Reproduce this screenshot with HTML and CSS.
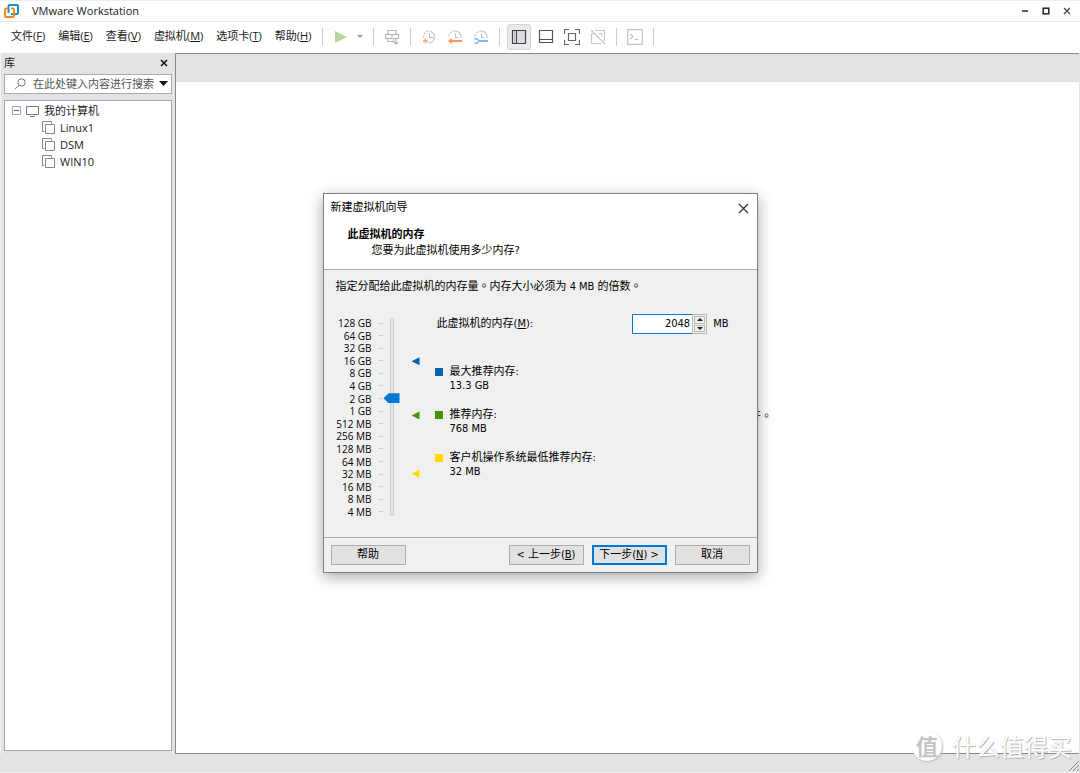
FILE: index.html
```html
<!DOCTYPE html>
<html lang="zh-CN">
<head>
<meta charset="utf-8">
<title>VMware Workstation</title>
<link rel="stylesheet" href="styles.css">
</head>
<body>
<div class="app">
  <header class="titlebar">
    <svg class="logo" width="16" height="16" viewBox="0 0 16 16" fill="none" stroke-width="2">
      <path d="M4.500 10V3a1 1 0 0 1 1-1H13a1 1 0 0 1 1 1v7a1 1 0 0 1-1 1H7" stroke="#1b8fc9"/>
      <path d="M4 5.500H2a1 1 0 0 0-1 1V13a1 1 0 0 0 1 1h7a1 1 0 0 0 1-1V6.500a1 1 0 0 0-1-1H7" stroke="#f38b20"/>
    </svg>
    <h1 class="app-name">VMware Workstation</h1>
    <div class="window-controls">
      <button type="button" aria-label="最小化"><svg width="8" height="8" viewBox="0 0 8 8"><path d="M1 4h6" stroke="#333" stroke-width="1.6"/></svg></button>
      <button type="button" aria-label="最大化"><svg width="8" height="8" viewBox="0 0 8 8"><rect x="1.2" y="1.2" width="5.600" height="5.600" fill="none" stroke="#222" stroke-width="1.5"/></svg></button>
      <button type="button" aria-label="关闭"><svg width="8" height="8" viewBox="0 0 8 8"><path d="M1 1l6 6M7 1L1 7" stroke="#444" stroke-width="1.2"/></svg></button>
    </div>
  </header>

  <div class="menubar">
    <nav class="menus">
      <button type="button">文件(<u>F</u>)</button>
      <button type="button">编辑(<u>E</u>)</button>
      <button type="button">查看(<u>V</u>)</button>
      <button type="button">虚拟机(<u>M</u>)</button>
      <button type="button">选项卡(<u>T</u>)</button>
      <button type="button">帮助(<u>H</u>)</button>
    </nav>
    <div class="tools">
      <div class="tool-group power">
        <button type="button" aria-label="开启"><svg width="16" height="16" viewBox="0 0 16 16"><path d="M2 2l12 6-12 6z" fill="#b5d7a0"/></svg></button>
        <button type="button" aria-label="电源选项"><svg width="6" height="4" viewBox="0 0 6 4"><path d="M0 0h6L3 3z" fill="#999"/></svg></button>
      </div>
      <div class="tool-group send">
        <button type="button" aria-label="发送"><svg width="18" height="18" viewBox="0 0 18 18" fill="none" stroke="#b4b4b4" stroke-width="1.2"><path d="M5 6.500v-4h8v4M9 6.500v4M2.500 11V6.500h13v4M2.500 10.500H9M5 11v2.500h5.500v-3h5M13 11v5M10.800 14l2.200 2.200 2.200-2.200"/></svg></button>
      </div>
      <div class="tool-group">
        <button type="button" aria-label="拍摄快照"><svg width="16" height="16" viewBox="0 0 16 16" fill="none"><path d="M8 2a6 6 0 1 1-1 12" stroke="#c4c4c4" stroke-width="1.2"/><path d="M7 2a6 6 0 0 0-4.500 7" stroke="#c4c4c4" stroke-width="1.2" stroke-dasharray="2 1.300"/><path d="M8.500 4.500v4H12" stroke="#bbb"/><path d="M4.500 9.500v5M2 12h5" stroke="#ffa477" stroke-width="1.400"/></svg></button>
        <button type="button" aria-label="恢复快照"><svg width="16" height="16" viewBox="0 0 16 16" fill="none"><path d="M8 2a6 6 0 0 1 6 7" stroke="#c4c4c4" stroke-width="1.2"/><path d="M8 2a6 6 0 0 0-6 7" stroke="#c4c4c4" stroke-width="1.2" stroke-dasharray="2 1.300"/><path d="M8.500 4.500v4H11" stroke="#bbb"/><path d="M2 12h13" stroke="#ff9460" stroke-width="2"/><path d="M5 9v6l-4-3z" fill="#ff9460"/></svg></button>
        <button type="button" aria-label="管理快照"><svg width="16" height="16" viewBox="0 0 16 16" fill="none"><path d="M8 2a6 6 0 0 1 6 7" stroke="#c4c4c4" stroke-width="1.2"/><path d="M8 2a6 6 0 0 0-6 7" stroke="#c4c4c4" stroke-width="1.2" stroke-dasharray="2 1.300"/><path d="M8.500 4.500v4H11" stroke="#bbb"/><path d="M6 12h9" stroke="#72c3ee" stroke-width="2"/><path d="M1.500 10Q5 9 5.500 12 5 15 1.500 14" stroke="#72c3ee" stroke-width="1.500"/></svg></button>
      </div>
      <div class="tool-group view">
        <button type="button" class="active" aria-label="显示库" aria-pressed="true"><svg width="16" height="16" viewBox="0 0 16 16" fill="none" stroke="#444"><path d="M7 2h7v12H7z" fill="#dcdde2" stroke="none"/><path d="M1.500 1.500h13v13h-13zM5.500 2v12" stroke-width="1.200"/><path d="M3.500 2v12" stroke="#bbb"/></svg></button>
        <button type="button" aria-label="缩略图栏"><svg width="16" height="16" viewBox="0 0 16 16" fill="none" stroke="#555" stroke-width="1.2"><path d="M1.500 1.500h13v12h-13zM1.500 10.500h13"/></svg></button>
        <button type="button" aria-label="全屏"><svg width="16" height="16" viewBox="0 0 16 16" fill="none" stroke="#666" stroke-width="1.200"><path d="M.5 5V.5h4.500M11 .5h4.500V5M15.500 11v4.500H11M5 15.500H.5V11M4.500 4.500h7v7h-7z"/></svg></button>
        <button type="button" aria-label="Unity"><svg width="16" height="16" viewBox="0 0 16 16" fill="none" stroke="#c8c8c8" stroke-width="1.200"><path d="M5 1.500h9.500V12M11.500 14.500h-10V5H4M1 1l14 14M8.500 4.500h3v3"/></svg></button>
      </div>
      <div class="tool-group">
        <button type="button" aria-label="控制台"><svg width="16" height="16" viewBox="0 0 16 16" fill="none" stroke="#c4c4c4" stroke-width="1.200"><path d="M.7.7h14.600v14.600H.7zM3.500 5L6 7.500 3.500 10M7.500 10.500h4"/></svg></button>
      </div>
    </div>
  </div>

  <div class="workspace">
    <aside class="library">
      <div class="library-head">
        <h2>库</h2>
        <button type="button" aria-label="关闭库"><svg width="8" height="8" viewBox="0 0 8 8"><path d="M1 1l6 6M7 1L1 7" stroke="#111" stroke-width="1.500"/></svg></button>
      </div>
      <div class="search">
        <svg width="12" height="12" viewBox="0 0 12 12" fill="none" stroke="#777"><circle cx="7.500" cy="4.500" r="3.700"/><path d="M5 7.500L.8 11"/></svg>
        <input type="text" aria-label="搜索" placeholder="在此处键入内容进行搜索">
        <button type="button" aria-label="搜索选项"><svg width="9" height="6" viewBox="0 0 9 6"><path d="M0 0h9L4.500 5z" fill="#111"/></svg></button>
      </div>
      <div class="tree">
        <div class="tree-root">
          <svg width="9" height="9" viewBox="0 0 9 9"><path d="M.5.5h8v8h-8z" fill="#fff" stroke="#aaa"/><path d="M2 4.500h5" stroke="#5568a0"/></svg>
          <svg width="13" height="12" viewBox="0 0 13 12" fill="none" stroke="#777"><path d="M.5 1.500h12v8H.5zM4 11.500h5"/></svg>
          <span>我的计算机</span>
        </div>
        <ul>
          <li><svg width="13" height="13" viewBox="0 0 13 13" fill="none" stroke="#888"><path d="M2.500 10.500h-2v-10h9v2M3.500 3.500h9v9h-9z"/></svg><span>Linux1</span></li>
          <li><svg width="13" height="13" viewBox="0 0 13 13" fill="none" stroke="#888"><path d="M2.500 10.500h-2v-10h9v2M3.500 3.500h9v9h-9z"/></svg><span>DSM</span></li>
          <li><svg width="13" height="13" viewBox="0 0 13 13" fill="none" stroke="#888"><path d="M2.500 10.500h-2v-10h9v2M3.500 3.500h9v9h-9z"/></svg><span>WIN10</span></li>
        </ul>
      </div>
    </aside>
    <main class="stage">
      <div class="tabstrip"></div>
      <div class="canvas"><p>开<span class="stop" lang="zh-TW">。</span></p></div>
    </main>
  </div>
  <footer class="statusbar">
    <svg width="10" height="10" viewBox="0 0 10 10" stroke="#888"><path d="M0 10L10 0M4 10l6-6M8 10l2-2"/></svg>
  </footer>

  <div class="overlay">
    <section class="dialog" role="dialog" aria-labelledby="dialog-title">
      <header class="dialog-head">
        <div class="dialog-title">
          <span id="dialog-title">新建虚拟机向导</span>
          <button type="button" aria-label="关闭"><svg width="11" height="11" viewBox="0 0 11 11"><path d="M1 1l9 9M10 1l-9 9" stroke="#333" stroke-width="1.200"/></svg></button>
        </div>
        <h2>此虚拟机的内存</h2>
        <p>您要为此虚拟机使用多少内存?</p>
      </header>
      <div class="dialog-body">
        <p class="hint">指定分配给此虚拟机的内存量<span class="stop" lang="zh-TW">。</span>内存大小必须为 4 MB 的倍数<span class="stop" lang="zh-TW">。</span></p>
        <div class="memory">
          <ol class="scale">
            <li>128 GB</li><li>64 GB</li><li>32 GB</li><li>16 GB</li><li>8 GB</li><li>4 GB</li><li>2 GB</li><li>1 GB</li><li>512 MB</li><li>256 MB</li><li>128 MB</li><li>64 MB</li><li>32 MB</li><li>16 MB</li><li>8 MB</li><li>4 MB</li>
          </ol>
          <input class="slider" type="range" min="0" max="15" value="9" aria-label="内存大小">
          <div class="markers">
            <i class="max" style="top:21%"></i>
            <i class="rec" style="top:48%"></i>
            <i class="min" style="top:77%"></i>
          </div>
          <div class="details">
            <div class="amount">
              <label for="mem">此虚拟机的内存(<u>M</u>):</label>
              <div class="spin">
                <input id="mem" type="text" inputmode="numeric" value="2048">
                <div class="spin-buttons">
                  <button type="button" aria-label="增加"><svg width="6" height="3" viewBox="0 0 6 3"><path d="M0 3h6L3 0z" fill="#222"/></svg></button>
                  <button type="button" aria-label="减少"><svg width="6" height="3" viewBox="0 0 6 3"><path d="M0 0h6L3 3z" fill="#222"/></svg></button>
                </div>
              </div>
              <span class="unit">MB</span>
            </div>
            <dl class="legend">
              <div class="max"><dt>最大推荐内存:</dt><dd>13.3 GB</dd></div>
              <div class="rec"><dt>推荐内存:</dt><dd>768 MB</dd></div>
              <div class="min"><dt>客户机操作系统最低推荐内存:</dt><dd>32 MB</dd></div>
            </dl>
          </div>
        </div>
      </div>
      <footer class="dialog-foot">
        <button type="button" class="help">帮助</button>
        <button type="button">&lt; 上一步(<u>B</u>)</button>
        <button type="button" class="primary">下一步(<u>N</u>) &gt;</button>
        <button type="button">取消</button>
      </footer>
    </section>
  </div>

  <div class="watermark"><span class="badge">值</span><span>什么值得买</span></div>
</div>
</body>
</html>
```
FILE: styles.css
```css
* { box-sizing: border-box; }
body, h1, h2, p, ul, ol, dl, dd { margin: 0; padding: 0; }
ul, ol { list-style: none; }
body {
  color: #1a1a1a;
  font: 11px/16px "Open Sans", "Noto Sans CJK SC", sans-serif;
}
button, input { font: inherit; color: inherit; margin: 0; }
button { padding: 0; border: 0; background: none; }
h1, h2 { font-size: 11px; font-weight: 400; }
svg { display: block; flex: none; }
u { text-underline-offset: 1px; }
.stop { font-family: "Noto Sans CJK TC", sans-serif; }

.app {
  position: relative;
  display: flex;
  flex-direction: column;
  min-height: 100vh;
  overflow: hidden;
  background: #e2e3e5;
}

/* Title and menu bars */
.titlebar {
  display: flex;
  align-items: center;
  height: 22px;
  padding: 0 9px 0 4px;
  border-top: 1px solid #eee;
  border-bottom: 1px solid #e8e8e8;
  background: #fff;
}
.app-name { margin-left: 12px; }
.window-controls { display: flex; gap: 13px; margin-left: auto; }
.menubar {
  display: flex;
  align-items: center;
  height: 31px;
  padding: 0 0 2px 11px;
  background: #fff;
}
.menus { display: flex; gap: 13px; padding-bottom: 1px; }
.menus button { white-space: nowrap; }
.tools { display: flex; margin-left: 11px; }
.tool-group {
  display: flex;
  align-items: center;
  gap: 10px;
  height: 18px;
  padding: 0 10px;
  border-left: 1px solid #ccc;
}
.tool-group:last-child { border-right: 1px solid #ccc; }
.tool-group.power { gap: 8px; }
.tool-group.send { padding: 0 9px; }
.tool-group.view { padding-left: 7px; }
.view .active {
  padding: 4px 3px;
  margin-right: -3px;
  border: 1px solid #d4d4d4;
  border-radius: 3px;
  background: #e9eaeb;
}

/* Workspace */
.workspace { flex: 1; display: flex; }
.library {
  display: flex;
  flex-direction: column;
  width: 175px;
  padding: 0 3px 3px;
  border-left: 1px solid #f2f2f2;
}
.library-head {
  display: flex;
  justify-content: space-between;
  align-items: center;
  height: 20px;
  padding-right: 4px;
}
.search {
  display: flex;
  align-items: center;
  height: 20px;
  margin-top: 1px;
  padding: 0 3px 0 9px;
  border: 1px solid #aaa;
  background: #fff;
}
.search input {
  flex: 1;
  min-width: 0;
  margin-left: 7px;
  padding: 0;
  border: 0;
  outline: 0;
  background: none;
}
.search input::placeholder { color: #555; opacity: 1; }
.tree {
  flex: 1;
  margin-top: 6px;
  padding: 1px 7px;
  border: 1px solid #a2a6ae;
  background: #fff;
  line-height: 17px;
}
.tree-root { display: flex; align-items: center; gap: 5px; }
.tree ul { padding-left: 30px; }
.tree li { display: flex; align-items: center; gap: 5px; height: 17px; }
.stage {
  flex: 1;
  display: flex;
  flex-direction: column;
  margin-right: 1px;
  border: 1px solid #888;
  border-right: 0;
  background: #fff;
}
.tabstrip { height: 28px; background: #e2e3e5; }
.canvas { flex: 1; display: grid; place-items: center; }
.canvas p { padding: 0 0 4px 267px; }
.statusbar {
  display: flex;
  justify-content: flex-end;
  align-items: flex-end;
  height: 19px;
  padding: 0 1px 1px;
  border-bottom: 1px solid #f0f0f0;
}

/* Wizard dialog */
.overlay {
  position: absolute;
  inset: 0;
  display: grid;
  place-items: center;
  padding-bottom: 7px;
}
.dialog {
  width: 435px;
  border: 1px solid #808080;
  background: #f0f0f0;
  box-shadow: 0 4px 14px rgba(0, 0, 0, .35);
  color: #000;
  font-family: "DejaVu Sans Condensed", "Noto Sans CJK SC", sans-serif;
  font-size: 11px;
}
.dialog-head {
  height: 76px;
  padding: 6px 8px 0 7px;
  border-bottom: 1px solid #aaa;
  background: #fff;
}
.dialog-title { display: flex; justify-content: space-between; align-items: center; }
.dialog-head h2 { margin: 11px 0 0 17px; font-weight: 700; }
.dialog-head p { margin-left: 41px; }
.dialog-body { padding: 7px 12px 19px; }
.memory { display: flex; margin-top: 22px; }
.scale {
  display: flex;
  flex-direction: column;
  justify-content: space-between;
  width: 48px;
  height: 201px;
  font-family: "Open Sans", sans-serif;
  font-size: 10px;
  line-height: 12px;
}
.scale li {
  display: flex;
  align-items: center;
  justify-content: flex-end;
  width: 48px;
  padding-right: 12px;
  white-space: nowrap;
  position: relative;
}
.scale li::after {
  content: "";
  position: absolute;
  right: 1px;
  width: 4px;
  height: 1px;
  background: #ccc;
}
.slider {
  appearance: none;
  writing-mode: vertical-lr;
  direction: rtl;
  width: 16px;
  height: 198px;
  margin-top: 1px;
  background: linear-gradient(#e0e3e3, #e0e3e3) center / 2px 100% no-repeat, linear-gradient(#ccd0d0, #ccd0d0) center / 4px 100% no-repeat;
}
.slider::-webkit-slider-thumb {
  appearance: none;
  width: 16px;
  height: 10px;
  background: #0078d7;
  clip-path: polygon(0 50%, 5px 0, 100% 0, 100% 100%, 5px 100%);
}
.markers { position: relative; width: 20px; }
.markers i {
  position: absolute;
  right: 0;
  width: 8px;
  height: 8px;
  margin-top: -2px;
  clip-path: polygon(0 50%, 100% 0, 100% 100%);
}
.max { --key: #0061ae; }
.rec { --key: #419507; }
.min { --key: #ffdb00; }
.markers i, .legend div::before { background: var(--key); }
.details { flex: 1; padding-left: 15px; }
.amount {
  display: flex;
  align-items: center;
  height: 20px;
  margin-top: -3px;
  padding: 0 16px 0 2px;
}
.spin {
  display: flex;
  width: 75px;
  height: 20px;
  margin-left: auto;
}
.spin input {
  width: 60px;
  padding: 0 2px 0 4px;
  border: 1px solid #0078d7;
  border-right: 0;
  outline: 0;
  background: #fff;
  text-align: right;
}
.spin-buttons {
  flex: 1;
  display: grid;
  grid-template-rows: 1fr 1fr;
  gap: 1px;
  padding: 1px;
  border: 1px solid #bbb;
}
.spin-buttons button {
  display: grid;
  place-items: center;
  border: 1px solid #bbb;
  background: #eee;
}
.unit { padding-left: 6px; }
.legend { display: grid; gap: 15px; margin-top: 31px; line-height: 14px; }
.legend div { display: grid; grid-template-columns: 8px 1fr; column-gap: 7px; }
.legend div::before { content: ""; width: 8px; height: 8px; margin-top: 3px; }
.legend dd { grid-column: 2; }
.dialog-foot {
  display: flex;
  gap: 8px;
  height: 35px;
  padding: 7px;
  border-top: 1px solid #aaa;
}
.dialog-foot button {
  width: 75px;
  height: 20px;
  border: 1px solid #adadad;
  background: #e1e1e1;
  white-space: nowrap;
}
.dialog-foot .help { margin-right: auto; }
.dialog-foot .primary { border: 2px solid #0078d7; }

/* Site watermark over the lower right corner */
.watermark {
  position: absolute;
  right: 8px;
  bottom: 11px;
  display: flex;
  align-items: center;
  gap: 10px;
  color: #fff;
  font: 24px/32px "Noto Sans CJK SC", sans-serif;
  text-shadow: 1px 1px 1px #b4b4b4, 0 0 1px #ccc;
}
.badge {
  width: 30px;
  height: 30px;
  border-radius: 50%;
  background: #fff;
  box-shadow: 1px 1px 2px #bbb;
  color: #c4c4c4;
  font-size: 22px;
  font-weight: 700;
  line-height: 28px;
  text-align: center;
  text-shadow: none;
}
```
